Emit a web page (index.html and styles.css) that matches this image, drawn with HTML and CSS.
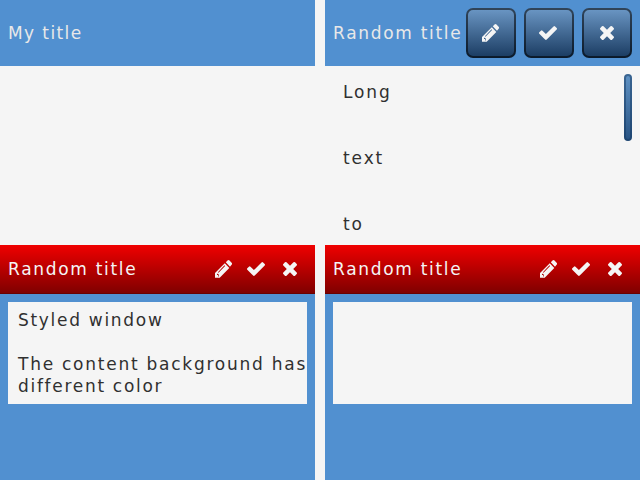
FILE: index.html
```
<!DOCTYPE html>
<html lang="en">
<head>
<meta charset="utf-8">
<title>Windows</title>
<link rel="stylesheet" href="styles.css">
</head>
<body>
<svg class="defs">
  <symbol id="pencil" viewBox="0 0 17 18"><path fill-rule="evenodd" d="M0 17.8V13L9.8 3.2l4.5 4.8L4.7 17.8zM10.8 2.3l1.7-1.7q1-1 2 0L16.6 2.7q1 1 0 2L15 6.8zM2.9 12.2l.6.6 6.6-6.9-.6-.6zM2 13.6v1.5h1.3v1.3h.7v-1.6z"/></symbol>
  <symbol id="check" viewBox="121 334 1550 1188"><path d="M1671 566q0 40-28 68l-724 724-136 136q-28 28-68 28t-68-28l-136-136-362-362q-28-28-28-68t28-68l136-136q28-28 68-28t68 28l294 295 656-657q28-28 68-28t68 28l136 136q28 28 28 68z"/></symbol>
  <symbol id="close" viewBox="302 366 1188 1188"><path d="M1490 1322q0 40-28 68l-136 136q-28 28-68 28t-68-28l-294-294-294 294q-28 28-68 28t-68-28l-136-136q-28-28-28-68t28-68l294-294-294-294q-28-28-28-68t28-68l136-136q28-28 68-28t68 28l294 294 294-294q28-28 68-28t68 28l136 136q28 28 28 68t-28 68l-294 294 294 294q28 28 28 68z"/></symbol>
</svg>
<main class="screen">
  <section class="window">
    <header class="header"><h2 class="title short">My title</h2></header>
  </section>
  <section class="window">
    <header class="header">
      <h2 class="title">Random title</h2>
      <div class="actions">
        <button class="button"><svg class="icon pencil"><use href="#pencil"/></svg></button>
        <button class="button"><svg class="icon check"><use href="#check"/></svg></button>
        <button class="button"><svg class="icon close"><use href="#close"/></svg></button>
      </div>
    </header>
    <div class="scroll">
      <div class="long"><p>Long</p><p>text</p><p>to</p></div>
      <div class="scrollbar"></div>
    </div>
  </section>
  <section class="window styled">
    <header class="header red">
      <h2 class="title">Random title</h2>
      <div class="actions flat">
        <button class="button plain"><svg class="icon pencil"><use href="#pencil"/></svg></button>
        <button class="button plain"><svg class="icon check"><use href="#check"/></svg></button>
        <button class="button plain"><svg class="icon close"><use href="#close"/></svg></button>
      </div>
    </header>
    <div class="content"><p>Styled window</p><br><p class="wide">The content background has</p><p>different color</p></div>
  </section>
  <section class="window styled">
    <header class="header red">
      <h2 class="title">Random title</h2>
      <div class="actions flat">
        <button class="button plain"><svg class="icon pencil"><use href="#pencil"/></svg></button>
        <button class="button plain"><svg class="icon check"><use href="#check"/></svg></button>
        <button class="button plain"><svg class="icon close"><use href="#close"/></svg></button>
      </div>
    </header>
    <div class="content"></div>
  </section>
</main>
</body>
</html>
```
FILE: styles.css
```
* { box-sizing: border-box; }
body {
  margin: 0;
  background: #f5f5f5;
  color: #303030;
  font: 17px/22px "DejaVu Sans", sans-serif;
  letter-spacing: 1.7px;
  white-space: nowrap;
}
p, h2 { margin: 0; font: inherit; }
.defs { display: none; }
.screen {
  display: grid;
  grid-template-columns: 315px 315px;
  grid-template-rows: 245px 235px;
  column-gap: 10px;
  width: 640px;
  height: 480px;
  overflow: hidden;
}
.window { overflow: hidden; }
.styled { background: #5190d0; }
.header {
  display: flex;
  align-items: center;
  justify-content: space-between;
  height: 66px;
  padding: 0 8px;
  background: #5190d0;
  color: #e8e8e8;
}
.title { width: 133px; }
.short { letter-spacing: 1.4px; }
.actions { display: flex; gap: 8px; flex: none; }
.button {
  display: flex;
  align-items: center;
  justify-content: center;
  width: 50px;
  height: 50px;
  padding: 0;
  border: 2px solid rgba(0, 0, 0, 0.55);
  border-radius: 7px;
  background: linear-gradient(#6c98c6, #193a60) border-box;
  color: #f5f5f5;
}
.icon { display: block; fill: currentColor; }
.icon.pencil { width: 17px; height: 18px; margin-right: 1px; }
.icon.check { width: 18px; height: 14px; margin-right: 2px; }
.icon.close { width: 14px; height: 14px; }
.red {
  height: 49px;
  border-bottom: 1px solid #690000;
  background: linear-gradient(#f00000, #7d0000) border-box;
  color: #f5f5f5;
}
.flat { gap: 0; padding-right: 1px; }
.plain { width: 33px; height: 33px; border: 0; background: none; }
.scroll {
  display: flex;
  justify-content: space-between;
  height: 179px;
  padding: 8px 8px 0 18px;
}
.long {
  display: flex;
  flex-direction: column;
  gap: 44px;
  padding-top: 7px;
  letter-spacing: 1.9px;
}
.scrollbar {
  width: 8px;
  height: 67px;
  border: 2px solid rgba(20, 55, 95, 0.5);
  border-radius: 4px;
  background: linear-gradient(#5f92c4, #285383) border-box;
}
.content {
  height: 102px;
  margin: 8px;
  padding: 7px 10px;
  overflow: hidden;
  background: #f5f5f5;
}
.wide { letter-spacing: 1.75px; }
```
